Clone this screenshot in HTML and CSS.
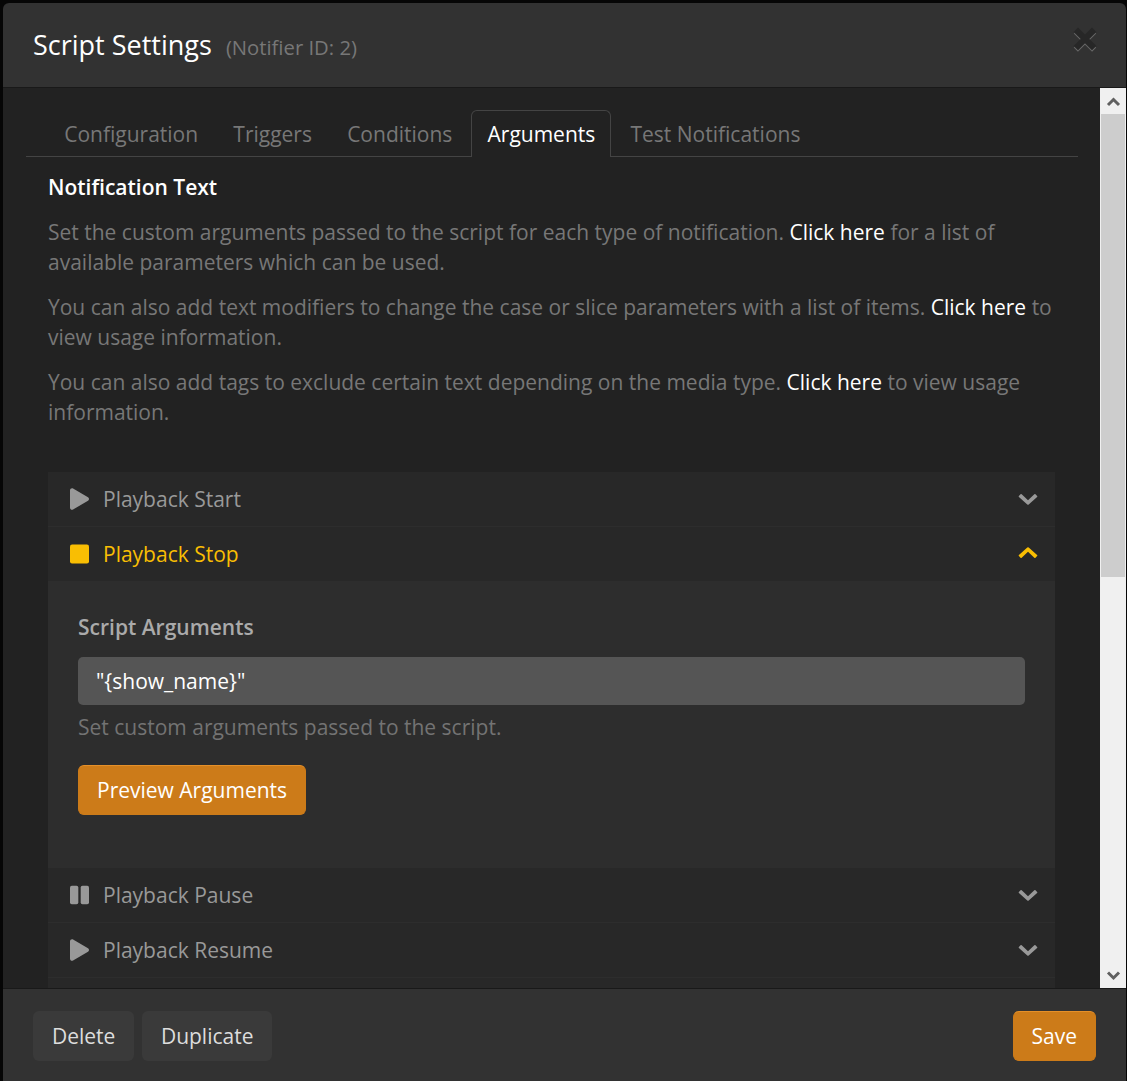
FILE: index.html
```html
<!DOCTYPE html>
<html lang="en">
<head>
<meta charset="utf-8">
<title>Script Settings</title>
<link rel="stylesheet" href="styles.css">
</head>
<body>
<svg class="defs" width="0" height="0">
  <symbol id="play" viewBox="0 0 448 512"><path d="M424.4 214.7L72.4 6.6C43.8-10.3 0 6.1 0 47.9V464c0 37.5 40.7 60.1 72.4 41.3l352-208c31.4-18.5 31.5-64.1 0-82.6z"/></symbol>
  <symbol id="stop" viewBox="0 0 448 512"><rect y="32" width="448" height="448" rx="48"/></symbol>
  <symbol id="pause" viewBox="0 0 448 512"><rect y="36" width="196" height="440" rx="42"/><rect x="252" y="36" width="196" height="440" rx="42"/></symbol>
  <symbol id="down" viewBox="0 0 20 12"><path d="M.9 3L2.500 1.200q.6-.6 1.200 0L10 7.200l6.300-6q.6-.6 1.200 0L19.100 3q.5.600 0 1.100L10.700 11.600q-.7.500-1.400 0L.9 4.100q-.5-.5 0-1.100z" fill="currentColor"/></symbol>
</svg>
<div class="modal">
  <header class="modal-header">
    <h4 class="title">Script Settings <small>(Notifier ID: 2)</small></h4>
    <svg class="close" viewBox="0 0 24 26"><path class="close-light" d="M3.500 5l17 17m0-17l-17 17"/><path class="close-dark" d="M3.500 3.500l17 17m0-17l-17 17"/></svg>
  </header>
  <div class="modal-body">
    <main class="content">
      <nav class="tabs">
        <a class="tab">Configuration</a>
        <a class="tab">Triggers</a>
        <a class="tab">Conditions</a>
        <a class="tab active">Arguments</a>
        <a class="tab">Test Notifications</a>
      </nav>
      <section class="pane">
        <h5 class="heading">Notification Text</h5>
        <p>Set the custom arguments passed to the script for each type of notification. <a class="link">Click here</a> for a list of available parameters which can be used.</p>
        <p>You can also add text modifiers to change the case or slice parameters with a list of items. <a class="link">Click here</a> to view usage information.</p>
        <p>You can also add tags to exclude certain text depending on the media type. <a class="link">Click here</a> to view usage information.</p>
        <div class="accordion">
          <div class="row"><svg class="icon"><use href="#play"/></svg><span>Playback Start</span><svg class="chevron"><use href="#down"/></svg></div>
          <div class="row open"><svg class="icon"><use href="#stop"/></svg><span>Playback Stop</span><svg class="chevron"><use href="#down"/></svg></div>
          <div class="panel">
            <label class="label" for="args">Script Arguments</label>
            <input class="input" id="args" type="text" value="&quot;{show_name}&quot;">
            <div class="help">Set custom arguments passed to the script.</div>
            <button class="btn bright">Preview Arguments</button>
          </div>
          <div class="row"><svg class="icon"><use href="#pause"/></svg><span>Playback Pause</span><svg class="chevron"><use href="#down"/></svg></div>
          <div class="row"><svg class="icon"><use href="#play"/></svg><span>Playback Resume</span><svg class="chevron"><use href="#down"/></svg></div>
          <div class="row"></div>
        </div>
      </section>
    </main>
    <div class="scrollbar">
      <svg class="arrow" viewBox="0 0 26 26"><path d="M8 17l5.500-5.500 5.500 5.500"/></svg>
      <div class="track"><div class="thumb"></div></div>
      <svg class="arrow" viewBox="0 0 26 26"><path d="M8 10.500l5.500 5.500 5.500-5.500"/></svg>
    </div>
  </div>
  <footer class="modal-footer">
    <button class="btn dark">Delete</button>
    <button class="btn dark duplicate">Duplicate</button>
    <button class="btn bright save">Save</button>
  </footer>
</div>
</body>
</html>
```
FILE: styles.css
```css
* { box-sizing: border-box; }
body {
  margin: 0;
  height: 1081px;
  padding: 3px 1px 0 3px;
  overflow: hidden;
  background: #060606;
  color: #777;
  font: 21px/30px "Open Sans", "Noto Sans", sans-serif;
}
.defs { position: absolute; }
.modal {
  display: flex;
  flex-direction: column;
  height: 1078px;
  background: #323232;
  border-radius: 6px 6px 0 0;
  overflow: hidden;
}
.modal-header {
  display: flex;
  justify-content: space-between;
  height: 85px;
  padding: 22px 28px 0 30px;
  border-bottom: 1px solid #191919;
}
.title { margin: 0; font-size: 27px; line-height: 40px; font-weight: 400; color: #fff; }
.title small { margin-left: 7px; font-size: 20.25px; color: #777; }
.close { width: 26px; height: 28px; margin-top: 1px; fill: none; }
.close-light { stroke: #666; stroke-width: 5.5; }
.close-dark { stroke: #272727; stroke-width: 5.7; }
.modal-body { display: flex; height: 900px; background: #222; overflow: hidden; }
.content { flex: 1; padding: 22px 22px 0 23px; }
.tabs {
  display: flex;
  gap: 3px;
  height: 47px;
  padding-left: 22px;
  border-bottom: 1px solid #444;
}
.tab {
  height: 47px;
  padding: 8px 15px 0 15.2px;
  border: 1px solid transparent;
  border-bottom: 0;
  border-radius: 6px 6px 0 0;
  white-space: nowrap;
}
.tab.active { background: #222; border-color: #444; color: #fff; }
.pane { padding: 15px 23px 0 22px; }
.heading { margin: 0 0 15px; font-size: 21px; font-weight: 600; color: #fff; }
p { margin: 0 0 15px; }
.link { color: #fff; }
.accordion { margin-top: 45px; background: #282828; color: #999; }
.row {
  display: flex;
  align-items: center;
  height: 55px;
  padding: 0 17px 0 22px;
  border-bottom: 1px solid #2d2d2d;
}
.icon { width: 19px; height: 22px; margin-right: 14px; fill: currentColor; }
.chevron { width: 20px; height: 12px; margin-left: auto; }
.open { color: #f9be03; }
.open .chevron { margin-bottom: 2px; transform: rotate(180deg); }
.panel { height: 286px; padding: 30px 30px 0; background: #2d2d2d; }
.label { display: block; margin-bottom: 15px; font-weight: 600; color: #aaa; }
.input {
  display: block;
  width: 100%;
  height: 48px;
  padding: 0 18px;
  border: 0;
  border-radius: 5px;
  background: #555;
  color: #fff;
  font: inherit;
}
.help { margin: 7px 0 23px; color: #737373; }
.btn {
  height: 50px;
  padding: 0 18px;
  border: 1px solid transparent;
  border-radius: 6px;
  font: inherit;
  color: #fff;
}
.bright { background: #cc7b19; border-color: #cc7b19; border-top-color: #e59029; }
.dark { background: #3a3a3a; color: #ddd; }
.duplicate { padding: 0 17.5px; }
.scrollbar { display: flex; flex-direction: column; width: 26px; background: #f0f0f0; }
.arrow { width: 26px; height: 26px; fill: none; stroke: #606060; stroke-width: 3; }
.track { flex: 1; padding: 0 1px; }
.thumb { height: 463px; background: #cdcdcd; }
.modal-footer {
  display: flex;
  gap: 8px;
  height: 93px;
  padding: 22px 30px 0;
  border-top: 1px solid #191919;
}
.save { margin-left: auto; }
```
